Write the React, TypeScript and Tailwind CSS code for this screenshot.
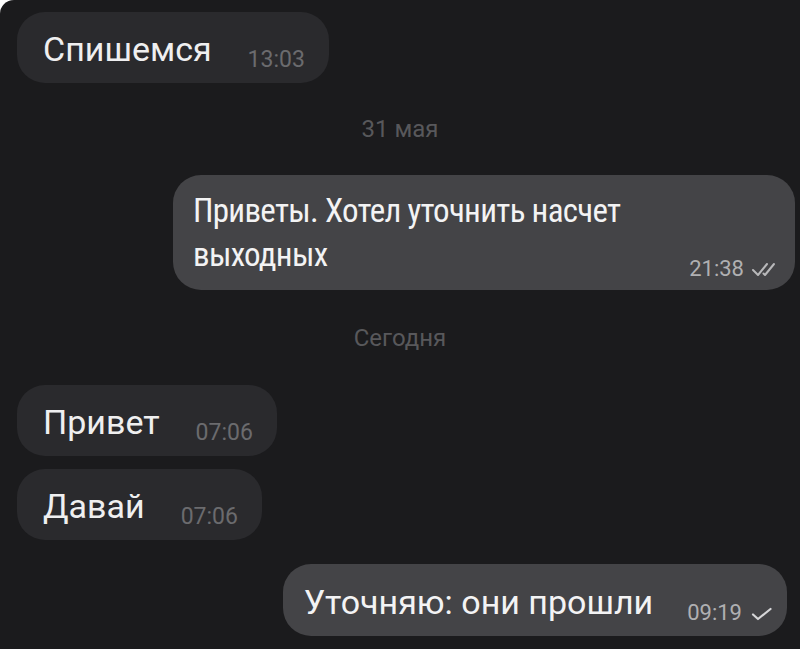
import React from "react";

const font = { fontFamily: "Roboto, 'Noto Sans', 'Liberation Sans', sans-serif" };

function DoubleCheck() {
  return (
    <svg width="30" height="15" viewBox="0 0 30 15" fill="none" stroke="#b8b8ba" strokeWidth="2" strokeLinecap="round" strokeLinejoin="round">
      <path d="M2 8 L7 13 L16 2" />
      <path d="M12.5 11.5 L14 13 L23 2" />
    </svg>
  );
}

function SingleCheck() {
  return (
    <svg width="22" height="14" viewBox="0 0 22 14" fill="none" stroke="#d6d6d8" strokeWidth="2.2" strokeLinecap="round" strokeLinejoin="round">
      <path d="M2 7.5 L7 12 L19.5 2" />
    </svg>
  );
}

function Incoming({ text, time }: { text: string; time: string }) {
  return (
    <div className="flex">
      <div className="ml-[17px] flex h-[71px] items-end rounded-[28px] bg-[#2a2a2d] pl-[26px] pr-[24px] pb-[12px]">
        <span className="text-[34px] leading-[44px] text-[#efeff0]">{text}</span>
        <span className="ml-[36px] text-[23px] leading-[22px] text-[#6b6b6e]">{time}</span>
      </div>
    </div>
  );
}

export default function App() {
  return (
    <div className="h-[649px] w-[800px] overflow-hidden bg-white" style={font}>
      <div className="flex h-full w-full flex-col rounded-tl-[14px] bg-[#1b1b1d] pt-[12px]">
        <Incoming text="Спишемся" time="13:03" />
        <div className="flex h-[92px] items-center justify-center">
          <span className="text-[24px] leading-[24px] text-[#58585b]">31 мая</span>
        </div>
        <div className="flex justify-end">
          <div className="mr-[5px] flex h-[115px] w-[622px] items-end rounded-[28px] bg-[#444447] pl-[20px] pr-[14px] pb-[13px]">
            <span
              className="text-[33px] leading-[44px] tracking-[-0.7px] text-[#f3f3f4]"
              style={{ fontFamily: "'Liberation Sans Narrow', 'Roboto Condensed', Roboto, sans-serif" }}
            >
              Приветы. Хотел уточнить насчет
              <br />
              выходных
            </span>
            <span className="-mb-[3px] ml-auto flex items-end gap-[7px]">
              <span className="text-[22px] leading-[22px] text-[#b0b0b2]">21:38</span>
              <span className="mb-[3px]"><DoubleCheck /></span>
            </span>
          </div>
        </div>
        <div className="flex h-[95px] items-center justify-center">
          <span className="text-[24px] leading-[24px] text-[#58585b]">Сегодня</span>
        </div>
        <Incoming text="Привет" time="07:06" />
        <div className="h-[13px]" />
        <Incoming text="Давай" time="07:06" />
        <div className="h-[24px]" />
        <div className="flex justify-end">
          <div className="mr-[13px] flex h-[72px] items-end rounded-[28px] bg-[#444447] pl-[21px] pr-[14px] pb-[12px]">
            <span className="text-[34px] leading-[44px] text-[#f3f3f4]">Уточняю: они прошли</span>
            <span className="ml-[34px] flex items-end gap-[9px]">
              <span className="text-[22px] leading-[22px] text-[#b0b0b2]">09:19</span>
              <span className="mb-[3px]"><SingleCheck /></span>
            </span>
          </div>
        </div>
      </div>
    </div>
  );
}
